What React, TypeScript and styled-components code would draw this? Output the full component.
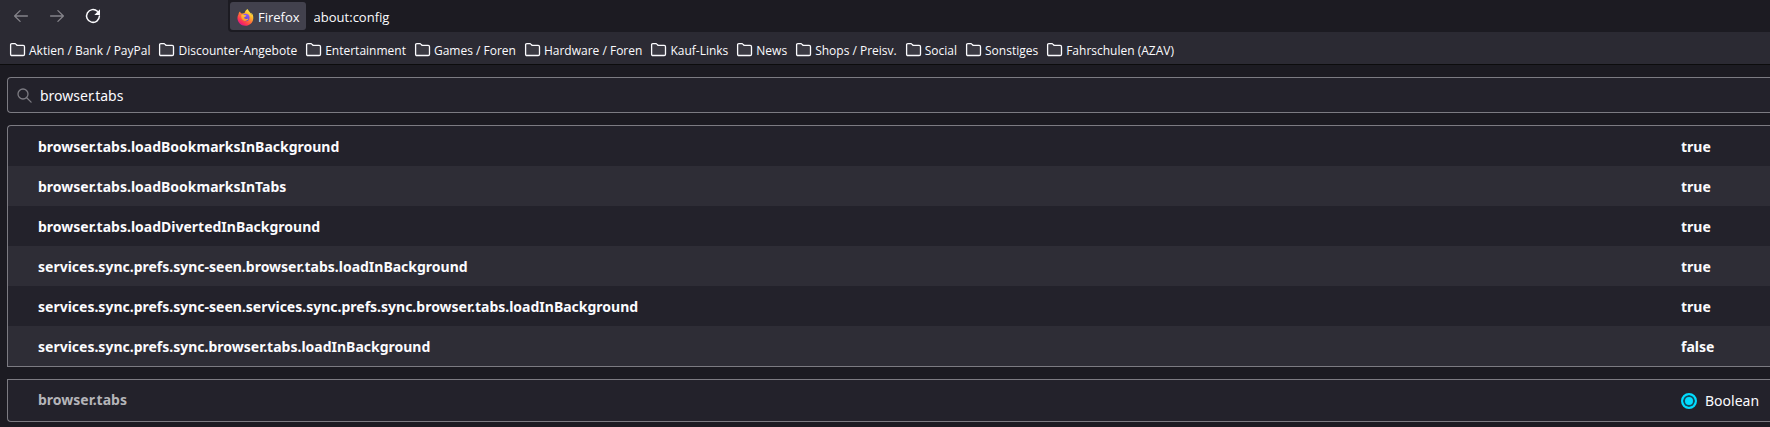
import React, { useState } from 'react';
import styled, { createGlobalStyle } from 'styled-components';

const GlobalStyle = createGlobalStyle`
  *, *::before, *::after { box-sizing: border-box; }
  body {
    margin: 0;
    background: #1c1b22;
    color: #fbfbfe;
    font-family: "Noto Sans", "Open Sans", sans-serif;
    font-size: 14px;
    overflow-x: hidden;
  }
`;

const Chrome = styled.header`
  background: #2b2a33;
  border-bottom: 1px solid #0c0c0d;
  font-family: "Open Sans", "Noto Sans", sans-serif;
`;

const Toolbar = styled.div`
  display: flex;
  align-items: stretch;
  height: 32px;
  padding-left: 3px;
`;

const NavButtons = styled.nav`
  display: flex;
  width: 225px;
  flex: none;
`;

const NavButton = styled.button`
  display: flex;
  align-items: center;
  justify-content: center;
  width: 36px;
  height: 32px;
  padding: 0;
  border: 0;
  background: none;
  color: #fbfbfe;

  &:disabled { color: #84838a; }
`;

const UrlBar = styled.div`
  display: flex;
  flex: 1;
  min-width: 0;
  padding: 2px 0 2px 2px;
  border-bottom-left-radius: 4px;
  background: #1c1b22;
`;

const IdentityButton = styled.button`
  display: flex;
  align-items: center;
  gap: 4px;
  flex: none;
  padding: 2px 6px 0 7px;
  border: 0;
  border-radius: 3px;
  background: #42414d;
  color: #fbfbfe;
  font: inherit;
  font-size: 13px;
`;

const UrlInput = styled.input`
  flex: 1;
  min-width: 0;
  padding: 2px 8px 0;
  border: 0;
  outline: 0;
  background: none;
  color: #fbfbfe;
  font: inherit;
  font-size: 13px;
`;

const Bookmarks = styled.div`
  display: flex;
  align-items: center;
  gap: 8px;
  height: 32px;
  padding: 4px 9px 0;
`;

const BookmarkFolder = styled.button`
  display: flex;
  align-items: center;
  gap: 3px;
  padding: 0;
  border: 0;
  background: none;
  color: #fbfbfe;
  font: inherit;
  font-size: 12px;
  line-height: 16px;
  white-space: nowrap;
`;

const FolderName = styled.span`
  padding-top: 2px;
`;

const Page = styled.main`
  display: flex;
  flex-direction: column;
  gap: 12px;
  padding: 12px 0 4px 7px;
`;

const SearchBox = styled.label`
  display: flex;
  align-items: center;
  gap: 7px;
  height: 36px;
  padding-left: 8px;
  border: 1px solid #7c7b82;
  border-right: 0;
  border-radius: 4px 0 0 4px;
  background: #23222b;
  color: #7c7b82;
`;

const SearchInput = styled.input`
  flex: 1;
  min-width: 0;
  padding: 0;
  border: 0;
  outline: 0;
  background: none;
  color: #fbfbfe;
  font: inherit;
`;

const PrefTable = styled.table<{ $end?: boolean }>`
  width: 100%;
  border: 1px solid #7c7b82;
  border-right: 0;
  border-radius: ${(p) => (p.$end ? '0 0 0 4px' : '4px 0 0 0')};
  border-spacing: 0;
  background: #23222b;
  line-height: 20px;
`;

const PrefRow = styled.tr<{ $muted?: boolean }>`
  height: ${(p) => (p.$muted ? 41 : 40)}px;
  color: ${(p) => (p.$muted ? '#b5b5b9' : '#fbfbfe')};

  &:nth-child(even) { background: #2e2d36; }
`;

const PrefName = styled.th<{ $muted?: boolean }>`
  padding: ${(p) => (p.$muted ? '0 0 2px 30px' : '2px 0 0 30px')};
  text-align: left;
  font-weight: 700;
`;

const PrefValue = styled.td<{ $plain?: boolean }>`
  width: 89px;
  padding: ${(p) => (p.$plain ? 0 : '2px 0 0')};
  color: #fbfbfe;
  font-weight: ${(p) => (p.$plain ? 400 : 700)};
`;

const TypeLabel = styled.label`
  display: flex;
  align-items: center;
  gap: 8px;
`;

const Radio = styled.input`
  appearance: none;
  flex: none;
  width: 16px;
  height: 16px;
  margin: 0;
  border: 2px solid #8f8f9d;
  border-radius: 50%;

  &:checked {
    border-color: #00ddff;
    background: #00ddff;
    box-shadow: inset 0 0 0 2px #14495a;
  }
`;

const ArrowIcon = ({ forward }: { forward?: boolean }) => (
  <svg width="16" height="16" viewBox="0 0 16 16" fill="none" stroke="currentColor" strokeWidth="1.3" strokeLinecap="round" strokeLinejoin="round">
    <path d={forward ? 'M1.6 8h12.8M8.9 2.6 14.4 8l-5.5 5.4' : 'M14.4 8H1.6M7.1 2.6 1.6 8l5.5 5.4'} />
  </svg>
);

const ReloadIcon = () => (
  <svg width="16" height="16" viewBox="0 0 16 16" fill="none">
    <path d="M12.4 3.3A6.4 6.4 0 1 0 14.4 8" stroke="currentColor" strokeWidth="1.5" strokeLinecap="round" />
    <path d="M15 1.3v5.2a.5.5 0 0 1-.5.5H9.3z" fill="currentColor" />
  </svg>
);

const FolderIcon = () => (
  <svg width="17" height="16" viewBox="0 0 17 16">
    <path
      d="M1.6 12.2V2.8q0-1.2 1.2-1.2h3.1q.6 0 1 .5l.8.9q.3.4.9.4h5.6q1.3 0 1.3 1.3v7.5q0 1.3-1.3 1.3H2.9q-1.3 0-1.3-1.3z"
      fill="#3b3a43"
      stroke="#fbfbfe"
      strokeWidth="1.3"
    />
  </svg>
);

const SearchIcon = () => (
  <svg width="17" height="17" viewBox="0 0 17 17" fill="none" stroke="currentColor" strokeWidth="1.3" strokeLinecap="round">
    <circle cx="7" cy="7" r="5" />
    <path d="m10.7 10.7 4.4 4.4" />
  </svg>
);

const FirefoxIcon = () => (
  <svg width="17" height="17" viewBox="0 0 32 32">
    <defs>
      <linearGradient id="flame" x1="0.85" y1="0.1" x2="0.25" y2="0.95">
        <stop offset="0" stopColor="#fff44f" />
        <stop offset="0.3" stopColor="#ffb62c" />
        <stop offset="0.55" stopColor="#ff7139" />
        <stop offset="0.8" stopColor="#ff3750" />
        <stop offset="1" stopColor="#e31587" />
      </linearGradient>
      <linearGradient id="globe" x1="0.7" y1="0" x2="0.3" y2="1">
        <stop offset="0" stopColor="#9059ff" />
        <stop offset="1" stopColor="#5b3fc4" />
      </linearGradient>
      <linearGradient id="tail" x1="0.7" y1="0" x2="0.2" y2="1">
        <stop offset="0" stopColor="#ffd23e" />
        <stop offset="1" stopColor="#ff8a2b" />
      </linearGradient>
    </defs>
    <path d="M29.8 11.2c-.7-1.7-2.2-3.5-3.3-4.1.9 1.8 1.4 3.5 1.6 4.8C26.2 7.3 23.2 5.5 20.7 1.5 20 .7 19.8 0 19.7 0c-3.4 2-4.9 5.4-5.3 7.4-1.5.1-2.9.5-4.2 1.1C7.8 8.4 6.4 7.6 5.7 4.6 3.9 5.6 3 8.2 2.9 9.8 1.6 12 .8 14.5.8 17.1.8 25.2 7.4 31.7 15.7 31.7c7.9 0 14.4-6 14.9-13.8.2-2.2 0-4.5-.8-6.7z" fill="url(#flame)" />
    <circle cx="16.5" cy="16" r="7" fill="url(#globe)" />
    <path d="M8.2 11.3c1.8-1 4.5-1 6.7.3 1.1.1 2.3.1 2.5.5.1 1.7-2.3 2.6-3.5 3.1-.7 1.1-.2 2.6 1.4 3.2 2.3 1 4.3-1 6.3.1-1.6 3.1-4.4 4.5-7.5 4-4-.7-6.9-5.2-5.9-11.2z" fill="url(#tail)" />
  </svg>
);

const folders = [
  'Aktien / Bank / PayPal',
  'Discounter-Angebote',
  'Entertainment',
  'Games / Foren',
  'Hardware / Foren',
  'Kauf-Links',
  'News',
  'Shops / Preisv.',
  'Social',
  'Sonstiges',
  'Fahrschulen (AZAV)',
];

const prefs: [string, boolean][] = [
  ['browser.tabs.loadBookmarksInBackground', true],
  ['browser.tabs.loadBookmarksInTabs', true],
  ['browser.tabs.loadDivertedInBackground', true],
  ['services.sync.prefs.sync-seen.browser.tabs.loadInBackground', true],
  ['services.sync.prefs.sync-seen.services.sync.prefs.sync.browser.tabs.loadInBackground', true],
  ['services.sync.prefs.sync.browser.tabs.loadInBackground', false],
];

export default function App() {
  const [url, setUrl] = useState('about:config');
  const [query, setQuery] = useState('browser.tabs');

  return (
    <>
      <GlobalStyle />
      <Chrome>
        <Toolbar>
          <NavButtons>
            <NavButton disabled aria-label="Back"><ArrowIcon /></NavButton>
            <NavButton disabled aria-label="Forward"><ArrowIcon forward /></NavButton>
            <NavButton aria-label="Reload"><ReloadIcon /></NavButton>
          </NavButtons>
          <UrlBar>
            <IdentityButton><FirefoxIcon />Firefox</IdentityButton>
            <UrlInput aria-label="Address" value={url} onChange={(e) => setUrl(e.target.value)} />
          </UrlBar>
        </Toolbar>
        <Bookmarks>
          {folders.map((name) => (
            <BookmarkFolder key={name}>
              <FolderIcon />
              <FolderName>{name}</FolderName>
            </BookmarkFolder>
          ))}
        </Bookmarks>
      </Chrome>
      <Page>
        <SearchBox>
          <SearchIcon />
          <SearchInput aria-label="Search preference name" value={query} onChange={(e) => setQuery(e.target.value)} />
        </SearchBox>
        <PrefTable>
          <tbody>
            {prefs.map(([name, value]) => (
              <PrefRow key={name}>
                <PrefName scope="row">{name}</PrefName>
                <PrefValue>{String(value)}</PrefValue>
              </PrefRow>
            ))}
          </tbody>
        </PrefTable>
        <PrefTable $end>
          <tbody>
            <PrefRow $muted>
              <PrefName $muted scope="row">{query}</PrefName>
              <PrefValue $plain>
                <TypeLabel><Radio type="radio" name="type" defaultChecked />Boolean</TypeLabel>
              </PrefValue>
            </PrefRow>
          </tbody>
        </PrefTable>
      </Page>
    </>
  );
}
